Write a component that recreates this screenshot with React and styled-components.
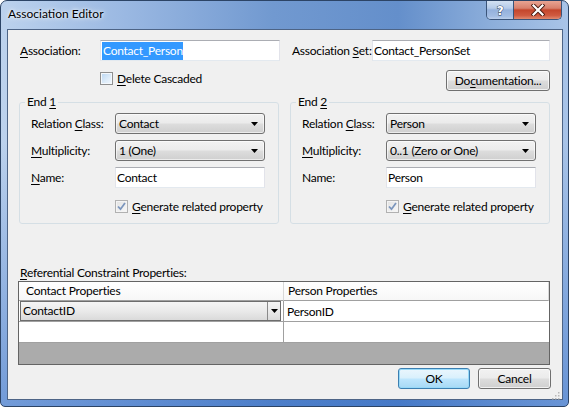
import React from 'react';
import styled, { createGlobalStyle, css } from 'styled-components';

const Global = createGlobalStyle`
  html, body { margin: 0; padding: 0; background: #ffffff; }
  body { font-family: "Lato", "Noto Sans", sans-serif; font-size: 12px; letter-spacing: -0.25px; color: #000; }
  * { box-sizing: border-box; }
`;

const Window = styled.div`
  width: 569px;
  height: 407px;
  display: flex;
  flex-direction: column;
  border: 1px solid #2c4466;
  border-radius: 7px 7px 5px 5px;
  padding: 0 5px 6px 6px;
  background:
    linear-gradient(to bottom, rgba(255,255,255,0) 0, rgba(255,255,255,0) 35%, rgba(40,100,195,0.5) 100%),
    linear-gradient(to right, #bcd2ed 0%, #9ab8e2 22%, #7199d0 48%, #648fcb 70%, #8badda 86%, #a9c4e8 100%);
  overflow: hidden;
`;

const TitleBar = styled.div`
  height: 28px;
  display: flex;
  align-items: flex-start;
  flex: none;
`;

const Title = styled.div`
  margin: 5px 0 0 1px;
  line-height: 16px;
  font-size: 12px;
  letter-spacing: 0;
  color: #000;
  text-shadow: 0 0 6px rgba(255,255,255,0.95), 0 0 3px rgba(255,255,255,0.9);
`;

const CaptionButtons = styled.div`
  margin-left: auto;
  margin-right: 1px;
  display: flex;
  height: 19px;
  border: 1px solid #3a5479;
  border-top: none;
  border-radius: 0 0 5px 5px;
  overflow: hidden;
`;

const CaptionButton = styled.div`
  width: ${p => p.$w}px;
  height: 100%;
  display: flex;
  align-items: center;
  justify-content: center;
  ${p => p.$close ? css`
    background: linear-gradient(to bottom, #e8a493 0%, #d8806c 40%, #c4462c 50%, #cf5a40 80%, #e08a70 100%);
  ` : css`
    background: linear-gradient(to bottom, #d3e1f2 0%, #b5cbe9 40%, #94b1dc 50%, #a3bde3 85%, #bcd0ec 100%);
    border-right: 1px solid #3a5479;
  `}
`;

const Client = styled.div`
  flex: 1;
  position: relative;
  display: flex;
  flex-direction: column;
  background: #f0f0f0;
  border: 1px solid #4d6486;
  padding: 10px 12px 0 11px;
`;

const Row = styled.div`
  display: flex;
  align-items: center;
  height: 21px;
  flex: none;
`;

const OptionsRow = styled(Row)`
  margin-top: 9px;
  padding-left: 81px;
  justify-content: space-between;
`;

const Label = styled.div`
  width: ${p => p.$w}px;
  flex: none;
  line-height: 16px;
  white-space: nowrap;
  padding-left: 1px;
`;

const Key = styled.span`
  text-decoration: underline;
  text-underline-offset: 2px;
`;

const TextBox = styled.div`
  width: ${p => p.$w ? `${p.$w}px` : 'auto'};
  flex: ${p => p.$w ? 'none' : 1};
  height: 21px;
  background: #fff;
  border: 1px solid #e2e3ea;
  border-top-color: #abadb3;
  border-bottom-color: #e3e9ef;
  padding: 1px 0 0 1px;
  line-height: 17px;
  white-space: nowrap;
`;

const Selected = styled.span`
  background: #3399ff;
  color: #fff;
  padding: 1px 0 2px 1px;
`;

const Combo = styled.div`
  flex: 1;
  height: 21px;
  display: flex;
  align-items: center;
  justify-content: space-between;
  border: 1px solid #707070;
  border-radius: 3px;
  padding: 0 6px 0 3px;
  background: linear-gradient(to bottom, #f2f2f2 0%, #ebebeb 48%, #dddddd 52%, #cfcfcf 100%);
  box-shadow: inset 0 0 0 1px rgba(255,255,255,0.6);
  white-space: nowrap;
`;

const Arrow = () => (
  <svg width="7" height="4" viewBox="0 0 7 4"><path d="M0 0h7L3.5 4z" fill="#000" /></svg>
);

const CheckWrap = styled.label`
  display: flex;
  align-items: center;
  gap: 4px;
  height: 13px;
  line-height: 16px;
  white-space: nowrap;
  align-self: ${p => p.$top ? 'flex-start' : 'center'};
  margin-top: ${p => p.$top ? '2px' : '0'};
`;

const CheckBox = styled.span`
  width: 13px;
  height: 13px;
  flex: none;
  display: flex;
  align-items: center;
  justify-content: center;
  ${p => p.$checked ? css`
    border: 1px solid #b1b1b1;
    background: linear-gradient(135deg, #e2e2e2, #f8f8f8);
    box-shadow: inset 0 0 0 1px #f4f4f4;
  ` : css`
    border: 1px solid #8e8f8f;
    background: linear-gradient(135deg, #b9d6f2 0%, #dcebf9 55%, #f3f8fd 100%);
    box-shadow: inset 0 0 0 1px #f4f8fc;
  `}
`;

const Check = () => (
  <svg width="9" height="9" viewBox="0 0 9 9">
    <path d="M1 4.5L3.5 7.2L8 1" fill="none" stroke="#7c96bd" strokeWidth="1.8" />
  </svg>
);

const Button = styled.div`
  width: ${p => p.$w}px;
  height: 21px;
  flex: none;
  display: flex;
  align-items: center;
  justify-content: center;
  border-radius: 3px;
  line-height: 16px;
  ${p => p.$default ? css`
    border: 1px solid #3c7fb1;
    background: linear-gradient(to bottom, #eaf6fd 0%, #d9f0fc 48%, #bee6fd 52%, #a7d9f5 100%);
    box-shadow: inset 0 0 0 1px #97d9f8;
  ` : css`
    border: 1px solid #707070;
    background: linear-gradient(to bottom, #f2f2f2 0%, #ebebeb 48%, #dddddd 52%, #cfcfcf 100%);
    box-shadow: inset 0 0 0 1px rgba(255,255,255,0.7);
  `}
`;

const Groups = styled.div`
  display: flex;
  gap: 11px;
  margin-top: 3px;
  flex: none;
`;

const Group = styled.fieldset`
  width: 260px;
  margin: 0;
  min-width: 0;
  border: 1px solid #d5dfe5;
  border-radius: 3px;
  padding: 3px 13px 10px 10px;
  display: flex;
  flex-direction: column;
  gap: 6px;
`;

const Legend = styled.legend`
  padding: 0 2px;
  margin-left: -5px;
  line-height: 16px;
`;

const CheckRow = styled.div`
  display: flex;
  height: 13px;
  margin-top: 6px;
  padding-left: 85px;
  align-items: center;
`;

const SectionLabel = styled.div`
  margin-top: 41px;
  line-height: 16px;
  padding-left: 1px;
`;

const Grid = styled.div`
  margin-left: -1px;
  width: 532px;
  height: 84px;
  flex: none;
  border: 1px solid #646464;
  display: grid;
  grid-template-columns: 265px 265px;
  grid-template-rows: 19px 21px 21px 21px;
`;

const HeadCell = styled.div`
  border-bottom: 1px solid #a0a0a0;
  border-right: 1px solid #d8d8d8;
  background: linear-gradient(to bottom, #ffffff 0%, #f7f7f7 100%);
  padding-left: ${p => p.$pad}px;
  line-height: 17px;
  white-space: nowrap;
`;

const Cell = styled.div`
  border-bottom: 1px solid #a0a0a0;
  border-right: ${p => p.$divider ? '1px solid #a0a0a0' : 'none'};
  background: #fff;
  padding-left: ${p => p.$pad ?? 3}px;
  line-height: 19px;
  display: flex;
  align-items: center;
  white-space: nowrap;
`;

const CellCombo = styled.div`
  margin: 0 2px 0 1px;
  flex: 1;
  height: 20px;
  display: flex;
  align-items: stretch;
  border: 1px solid #6d6d6d;
  background: linear-gradient(to bottom, #f5f5f5 0%, #eaeaea 50%, #dadada 100%);
`;

const CellComboText = styled.div`
  flex: 1;
  padding-left: 2px;
  line-height: 18px;
`;

const CellComboButton = styled.div`
  width: 13px;
  border-left: 1px solid #8a8a8a;
  display: flex;
  align-items: center;
  justify-content: center;
`;

const EmptyArea = styled.div`
  grid-column: 1 / span 2;
  background: #ababab;
`;

const ButtonRow = styled.div`
  display: flex;
  justify-content: flex-end;
  gap: 8px;
  margin-top: 3px;
  margin-right: -1px;
`;

const Grip = styled.div`
  position: absolute;
  right: 2px;
  bottom: 1px;
  width: 10px;
  height: 10px;
`;

const EndGroup = ({ n, cls, mult, name, nameKey }) => (
  <Group>
    <Legend>End <Key>{n}</Key></Legend>
    <Row>
      <Label $w={85}>Relation <Key>C</Key>lass:</Label>
      <Combo>{cls}<Arrow /></Combo>
    </Row>
    <Row>
      <Label $w={85}><Key>M</Key>ultiplicity:</Label>
      <Combo>{mult}<Arrow /></Combo>
    </Row>
    <Row>
      <Label $w={85}>{nameKey ? <><Key>N</Key>ame:</> : 'Name:'}</Label>
      <TextBox>{name}</TextBox>
    </Row>
    <CheckRow>
      <CheckWrap>
        <CheckBox $checked><Check /></CheckBox>
        <span><Key>G</Key>enerate related property</span>
      </CheckWrap>
    </CheckRow>
  </Group>
);

export default function App() {
  return (
    <>
      <Global />
      <Window>
        <TitleBar>
          <Title>Association Editor</Title>
          <CaptionButtons>
            <CaptionButton $w={27}>
              <svg width="10" height="13" viewBox="0 0 10 13">
                <text x="5" y="11" textAnchor="middle" fontFamily="DejaVu Sans, sans-serif" fontWeight="bold" fontSize="12" fill="#fff" stroke="#2b3d58" strokeWidth="0.9" paintOrder="stroke">?</text>
              </svg>
            </CaptionButton>
            <CaptionButton $w={47} $close>
              <svg width="14" height="12" viewBox="0 0 14 12">
                <path d="M2.5 1.5L11.5 10.5M11.5 1.5L2.5 10.5" stroke="#4a1a10" strokeWidth="4" strokeLinecap="square" />
                <path d="M2.5 1.5L11.5 10.5M11.5 1.5L2.5 10.5" stroke="#ffffff" strokeWidth="2.2" strokeLinecap="square" />
              </svg>
            </CaptionButton>
          </CaptionButtons>
        </TitleBar>
        <Client>
          <Row>
            <Label $w={81}><Key>A</Key>ssociation:</Label>
            <TextBox $w={180}><Selected>Contact_Person</Selected></TextBox>
            <Label $w={11} />
            <Label $w={81}>Association <Key>S</Key>et:</Label>
            <TextBox $w={178}>Contact_PersonSet</TextBox>
          </Row>
          <OptionsRow>
            <CheckWrap $top>
              <CheckBox />
              <span><Key>D</Key>elete Cascaded</span>
            </CheckWrap>
            <Button $w={104}>Do<Key>c</Key>umentation...</Button>
          </OptionsRow>
          <Groups>
            <EndGroup n="1" cls="Contact" mult="1 (One)" name="Contact" nameKey />
            <EndGroup n="2" cls="Person" mult="0..1 (Zero or One)" name="Person" />
          </Groups>
          <SectionLabel><Key>R</Key>eferential Constraint Properties:</SectionLabel>
          <Grid>
            <HeadCell $pad={7}>Contact Properties</HeadCell>
            <HeadCell $pad={4}>Person Properties</HeadCell>
            <Cell $divider $pad={0}>
              <CellCombo>
                <CellComboText>ContactID</CellComboText>
                <CellComboButton><Arrow /></CellComboButton>
              </CellCombo>
            </Cell>
            <Cell>PersonID</Cell>
            <Cell $divider />
            <Cell />
            <EmptyArea />
          </Grid>
          <ButtonRow>
            <Button $w={72} $default>OK</Button>
            <Button $w={73}>Cancel</Button>
          </ButtonRow>
          <Grip>
            <svg width="10" height="10" viewBox="0 0 10 10">
              {[[8,2],[8,5],[5,5],[8,8],[5,8],[2,8]].map(([x,y],i) => (
                <rect key={i} x={x} y={y} width="1.5" height="1.5" fill="#b8b8b8" />
              ))}
            </svg>
          </Grip>
        </Client>
      </Window>
    </>
  );
}
